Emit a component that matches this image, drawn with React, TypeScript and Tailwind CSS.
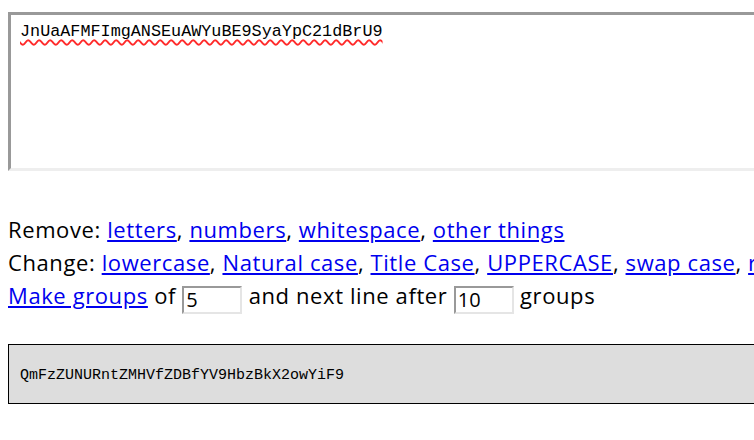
import { useState } from "react";

const removeLinks = ["letters", "numbers", "whitespace", "other things"];
const changeLinks = ["lowercase", "Natural case", "Title Case", "UPPERCASE", "swap case", "reverse"];

function Links({ items }: { items: string[] }) {
    return (
        <>
            {items.map((item, i) => (
                <span key={item}>
                    <a href="#" className="text-[#0000ee] underline">
                        {item}
                    </a>
                    {i < items.length - 1 ? ", " : ""}
                </span>
            ))}
        </>
    );
}

export default function App() {
    const [groupSize, setGroupSize] = useState("5");
    const [lineAfter, setLineAfter] = useState("10");

    return (
        <div className="w-[754px] h-[440px] overflow-hidden bg-white p-2 pt-3 font-['Open_Sans',sans-serif] text-black">
            <div className="w-[820px]">
                <div className="h-[159px] border-[3px] border-t-[#999] border-l-[#999] border-r-[#eee] border-b-[#eee] bg-white pl-[9px] pt-[6px] font-['Liberation_Mono',monospace] text-[16.8px] leading-[22px]">
                    <span className="underline decoration-wavy decoration-[#ff2a2a] decoration-[1.5px] underline-offset-[3px]">
                        JnUaAFMFImgANSEuAWYuBE9SyaYpC21dBrU9
                    </span>
                </div>

                <p className="mt-[42px] text-[22px] leading-[33px] tracking-[0.6px] whitespace-nowrap">
                    Remove: <Links items={removeLinks} />
                    <br />
                    Change: <Links items={changeLinks} />
                    <br />
                    <a href="#" className="text-[#0000ee] underline">
                        Make groups
                    </a>{" "}
                    of{" "}
                    <input
                        value={groupSize}
                        onChange={(e) => setGroupSize(e.target.value)}
                        className="w-[60px] h-[28px] align-[-3px] border-2 border-t-[#999] border-l-[#999] border-r-[#e5e5e5] border-b-[#e5e5e5] px-[2px] text-[20px] tracking-normal leading-none"
                    />{" "}
                    and next line after{" "}
                    <input
                        value={lineAfter}
                        onChange={(e) => setLineAfter(e.target.value)}
                        className="w-[60px] h-[28px] align-[-3px] border-2 border-t-[#999] border-l-[#999] border-r-[#e5e5e5] border-b-[#e5e5e5] px-[2px] text-[20px] tracking-normal leading-none"
                    />{" "}
                    groups
                </p>

                <div className="mt-[30px] h-[60px] border border-black bg-[#dddddd] pl-[11px] pt-[5px] flex items-center font-['Liberation_Mono',monospace] text-[15px]">
                    QmFzZUNURntZMHVfZDBfYV9HbzBkX2owYiF9
                </div>
            </div>
        </div>
    );
}
